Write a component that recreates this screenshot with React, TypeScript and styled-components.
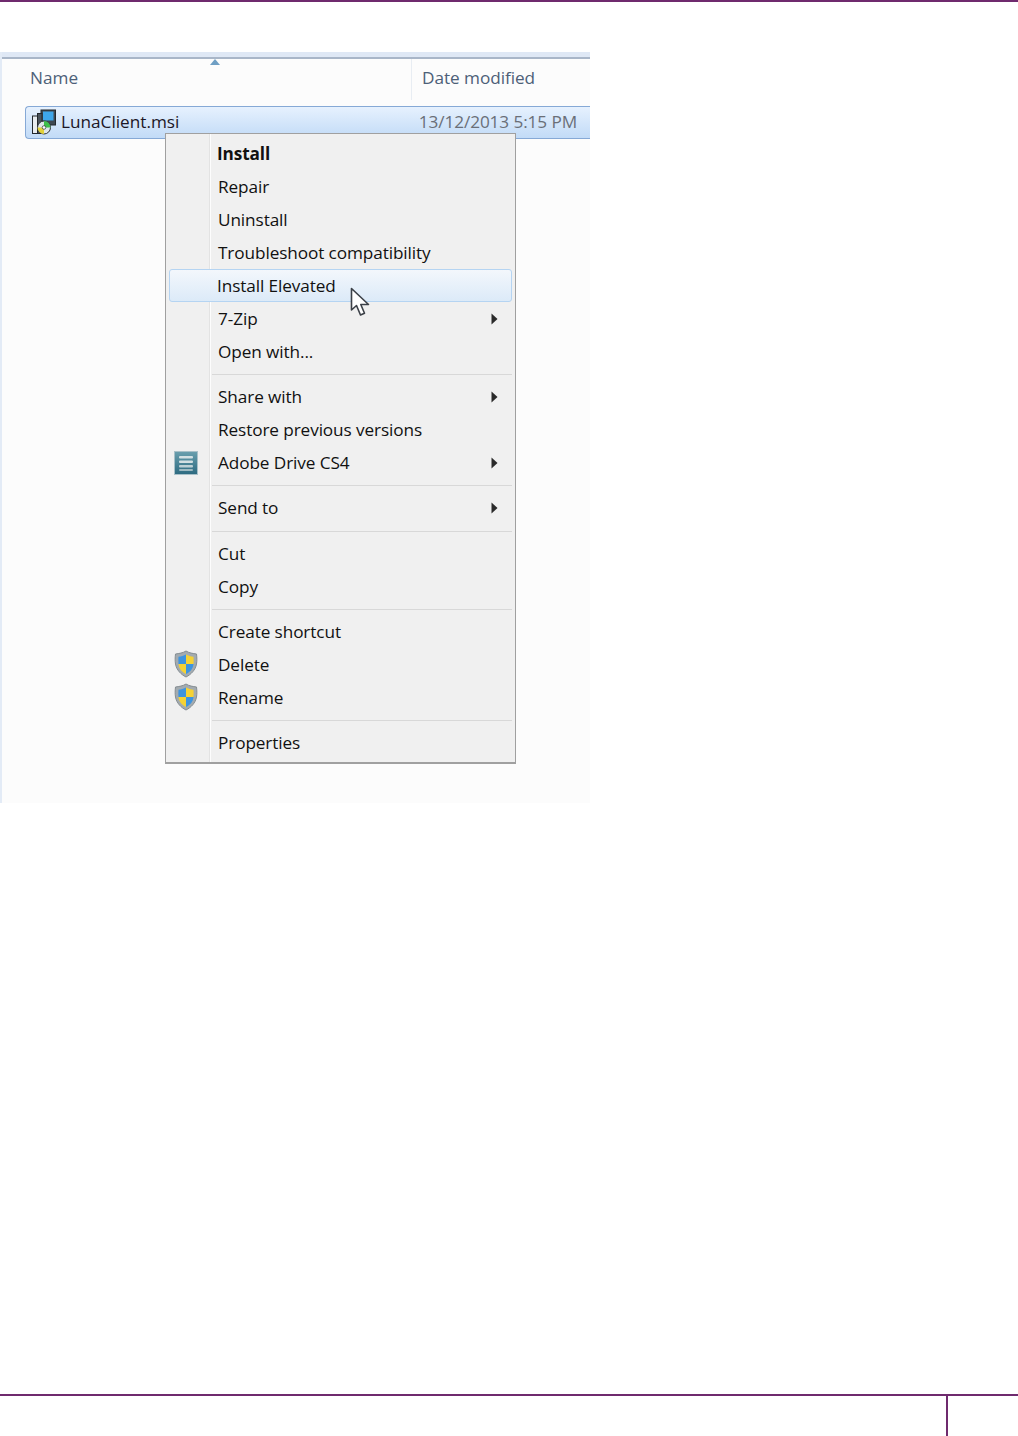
import styled, { createGlobalStyle } from "styled-components";

const GlobalStyle = createGlobalStyle`
  html, body {
    margin: 0;
    padding: 0;
    background: #ffffff;
  }
`;

type Item = {
  label: string;
  bold?: boolean;
  active?: boolean;
  arrow?: boolean;
  icon?: "shield" | "drive";
};

const menuGroups: Item[][] = [
  [
    { label: "Install", bold: true },
    { label: "Repair" },
    { label: "Uninstall" },
    { label: "Troubleshoot compatibility" },
    { label: "Install Elevated", active: true },
    { label: "7-Zip", arrow: true },
    { label: "Open with..." },
  ],
  [
    { label: "Share with", arrow: true },
    { label: "Restore previous versions" },
    { label: "Adobe Drive CS4", arrow: true, icon: "drive" },
  ],
  [{ label: "Send to", arrow: true }],
  [{ label: "Cut" }, { label: "Copy" }],
  [
    { label: "Create shortcut" },
    { label: "Delete", icon: "shield" },
    { label: "Rename", icon: "shield" },
  ],
  [{ label: "Properties" }],
];

const ShieldIcon = () => (
  <svg width="24" height="28" viewBox="0 0 24 28">
    <path d="M12 1 C15 3 19 3.500 22.500 4 C23 8 23 11 22.500 14 C21.500 20 17 24.500 12 27 C7 24.500 2.500 20 1.500 14 C1 11 1 8 1.500 4 C5 3.500 9 3 12 1 Z" fill="#a3abb0" stroke="#858d92" />
    <path d="M12 4.500 V14 H4.500 C4.300 11.500 4.300 9 4.500 6.800 C7 6.500 10 5.800 12 4.500 Z" fill="#3d94e0" />
    <path d="M12 4.500 C14 5.800 17 6.500 19.500 6.800 C19.700 9 19.700 11.500 19.500 14 H12 Z" fill="#f5d235" />
    <path d="M4.500 14 H12 V24 C8 22 5 19 4.500 14 Z" fill="#f5d235" />
    <path d="M12 14 H19.500 C19 19 16 22 12 24 Z" fill="#3d94e0" />
  </svg>
);

const DriveIcon = () => (
  <svg width="24" height="24" viewBox="0 0 24 24">
    <defs>
      <linearGradient id="driveFill" x1="0" y1="0" x2="0" y2="1">
        <stop offset="0" stopColor="#6a9fae" />
        <stop offset="1" stopColor="#2c6a80" />
      </linearGradient>
    </defs>
    <rect x="0.500" y="0.500" width="23" height="23" fill="url(#driveFill)" stroke="#a9c0c8" />
    <rect x="5" y="5" width="14" height="2.500" rx="1" fill="#d3e0e3" />
    <rect x="5" y="9.500" width="14" height="2.500" rx="1" fill="#d3e0e3" />
    <rect x="5" y="14" width="14" height="2.500" rx="1" fill="#bdd0d5" />
    <rect x="5" y="18" width="14" height="2" rx="1" fill="#9db9c1" />
  </svg>
);

const InstallerIcon = () => (
  <svg width="26" height="26" viewBox="0 0 26 26">
    <rect x="10" y="1" width="14.500" height="15" fill="#3f4952" stroke="#23282d" />
    <rect x="12" y="2.500" width="10.500" height="9" fill="#3ea6ea" />
    <rect x="1.500" y="7" width="5" height="17.500" fill="#e8ecef" stroke="#23282d" />
    <rect x="6.500" y="4.500" width="4.500" height="20" fill="#4a535b" stroke="#23282d" />
    <circle cx="13" cy="18.500" r="6.500" fill="#dfe6e8" stroke="#2f3439" />
    <path d="M13 18.500 L13 12 A6.500 6.500 0 0 1 19.500 18.500 Z" fill="#3fc04a" />
    <path d="M13 18.500 L6.500 18.500 A6.500 6.500 0 0 0 13 25 Z" fill="#e2d23a" />
    <circle cx="13" cy="18.500" r="1.800" fill="#ffffff" stroke="#2f3439" strokeWidth="0.700" />
  </svg>
);

const SortCaret = () => (
  <svg width="10" height="6" viewBox="0 0 10 6">
    <path d="M5 0 L10 6 H0 Z" fill="#6f9fc4" />
  </svg>
);

const MenuArrow = () => (
  <svg width="7" height="12" viewBox="0 0 7 12">
    <path d="M0.500 0.500 L6.500 6 L0.500 11.500 Z" fill="#2a2a2a" />
  </svg>
);

const PointerIcon = () => (
  <svg width="21" height="30" viewBox="0 0 21 30">
    <path
      d="M1.500 1.500 V23 L6.500 18.500 L10.500 28 L14.500 26.200 L10.800 17.500 H18.500 Z"
      fill="#ffffff"
      stroke="#3c4148"
      strokeWidth="1.600"
      strokeLinejoin="round"
    />
  </svg>
);

const App = () => {
  return (
    <Page>
      <GlobalStyle />
      <TopRule />
      <Explorer>
        <TitleBand />
        <ColumnHeader>
          <NameColumn>
            Name
            <CaretSlot>
              <SortCaret />
            </CaretSlot>
          </NameColumn>
          <DateColumn>Date modified</DateColumn>
        </ColumnHeader>
        <FileRow>
          <FileName>
            <InstallerIcon />
            <span>LunaClient.msi</span>
          </FileName>
          <FileDate>13/12/2013 5:15 PM</FileDate>
        </FileRow>
        <ContextMenu>
          {menuGroups.map((group, i) => (
            <MenuGroup key={i}>
              {group.map((item) => (
                <MenuRow key={item.label} $active={item.active}>
                  <IconCell>
                    {item.icon === "shield" && <ShieldIcon />}
                    {item.icon === "drive" && <DriveIcon />}
                  </IconCell>
                  <MenuLabel $bold={item.bold} $active={item.active}>
                    {item.label}
                  </MenuLabel>
                  {item.arrow && <MenuArrow />}
                  {item.active && (
                    <PointerSlot>
                      <PointerIcon />
                    </PointerSlot>
                  )}
                </MenuRow>
              ))}
            </MenuGroup>
          ))}
        </ContextMenu>
      </Explorer>
      <Footer>
        <PageCell />
      </Footer>
    </Page>
  );
};

export default App;

const Page = styled.div`
  display: flex;
  flex-direction: column;
  width: 1018px;
  height: 1436px;
  overflow: hidden;
  font-family: "Open Sans", "Liberation Sans", sans-serif;
  font-size: 17.200px;
`;

const TopRule = styled.div`
  height: 2px;
  background-color: #6f2a6e;
`;

const Explorer = styled.div`
  position: relative;
  width: 590px;
  height: 751px;
  margin-top: 50px;
  background-color: #fcfcfc;
  border-left: 2px solid #e3ebf6;
  box-sizing: border-box;
  overflow: hidden;
`;

const TitleBand = styled.div`
  height: 5px;
  margin-left: -2px;
  background-color: #dfe8f5;
  border-bottom: 2px solid #a9b6c8;
`;

const ColumnHeader = styled.div`
  display: flex;
  height: 41px;
  color: #4d6078;
  align-items: center;
`;

const NameColumn = styled.div`
  position: relative;
  width: 410px;
  height: 100%;
  padding: 0 0 4px 28px;
  box-sizing: border-box;
  display: flex;
  align-items: center;
  border-right: 1px solid #e8edf3;
`;

const CaretSlot = styled.span`
  position: absolute;
  left: 208px;
  top: 0;
  line-height: 0;
`;

const DateColumn = styled.div`
  padding: 0 0 4px 10px;
  letter-spacing: -0.050px;
`;

const FileRow = styled.div`
  display: flex;
  align-items: center;
  justify-content: space-between;
  height: 33px;
  margin: 6px 0 0 23px;
  padding: 0 13px 2px 5px;
  box-sizing: border-box;
  border: 1px solid #86a9d6;
  border-right: none;
  border-radius: 4px 0 0 4px;
  background: linear-gradient(#e6f1fe, #c2dbf7);
`;

const FileName = styled.div`
  display: flex;
  align-items: center;
  gap: 4px;
  color: #1c1626;
`;

const FileDate = styled.div`
  color: #6a6f78;
  letter-spacing: -0.100px;
`;

const ContextMenu = styled.div`
  position: absolute;
  left: 163px;
  top: 81px;
  width: 351px;
  box-sizing: border-box;
  padding: 2.500px 3px 2.500px;
  background: linear-gradient(
    to right,
    #f0f0f0 43px,
    #e3e3e3 43px,
    #e3e3e3 44px,
    #fdfdfd 44px,
    #fdfdfd 45px,
    #f0f0f0 45px
  );
  border: 1px solid #a0a0a0;
  border-bottom-width: 2px;
  color: #111111;
`;

const MenuGroup = styled.div`
  position: relative;

  & + & {
    margin-top: 12px;
  }

  & + &::before {
    content: "";
    position: absolute;
    left: 43px;
    right: 0;
    top: -6px;
    height: 1px;
    background-color: #d8d8d8;
  }
`;

const MenuRow = styled.div<{ $active?: boolean }>`
  position: relative;
  display: flex;
  align-items: center;
  height: 33.100px;
  box-sizing: border-box;
  padding-right: 13px;
  border: 1px solid ${(p) => (p.$active ? "#b5d4f2" : "transparent")};
  border-radius: 3px;
  background: ${(p) => (p.$active ? "linear-gradient(#f3f7fc, #dceaf8)" : "none")};
`;

const IconCell = styled.div`
  display: flex;
  align-items: center;
  justify-content: center;
  width: 31px;
  flex-shrink: 0;
`;

const MenuLabel = styled.span<{ $bold?: boolean; $active?: boolean }>`
  flex: 1;
  margin-left: ${(p) => (p.$bold || p.$active ? "16px" : "17px")};
  font-weight: ${(p) => (p.$bold ? 700 : 400)};
  white-space: nowrap;
  letter-spacing: -0.100px;
`;

const PointerSlot = styled.span`
  position: absolute;
  left: 180px;
  top: 17px;
  line-height: 0;
  z-index: 1;
`;

const Footer = styled.div`
  display: flex;
  justify-content: flex-end;
  height: 40px;
  margin-top: auto;
  border-top: 2px solid #6f2a6e;
`;

const PageCell = styled.div`
  width: 70px;
  border-left: 2px solid #6f2a6e;
`;
